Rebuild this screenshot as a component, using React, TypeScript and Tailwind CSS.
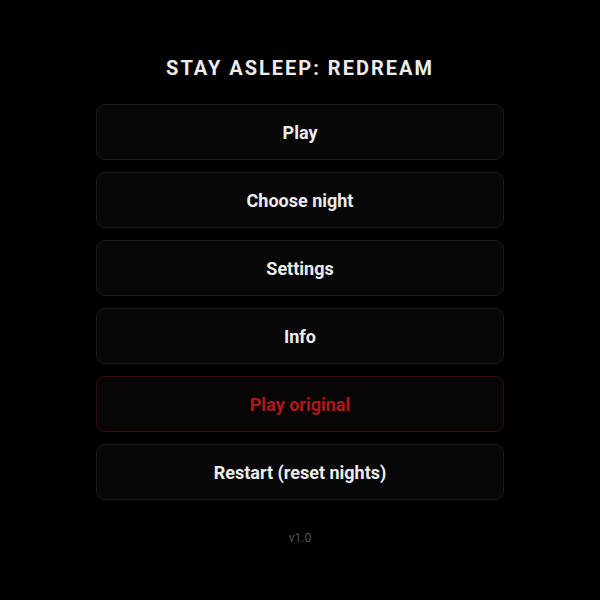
export default function App() {
  const items = ['Play', 'Choose night', 'Settings', 'Info']

  return (
    <div className="min-h-screen w-full bg-black flex flex-col items-center pt-[56px] font-['Roboto',sans-serif]">
      <h1 className="text-[20px] leading-[24px] font-bold tracking-[0.1em] text-[#ececec]">STAY ASLEEP: REDREAM</h1>
      <div className="mt-[24px] w-[408px] flex flex-col gap-3">
        {items.map(label => (
          <button
            key={label}
            className="h-14 w-full rounded-lg border border-[#1a1a1a] bg-[#070707] text-[18px] font-bold text-[#ececec]"
          >
            {label}
          </button>
        ))}
        <button className="h-14 w-full rounded-lg border border-[#3a0b0b] bg-[#060404] text-[18px] font-bold text-[#b3161b]">
          Play original
        </button>
        <button className="h-14 w-full rounded-lg border border-[#1a1a1a] bg-[#070707] text-[18px] font-bold text-[#ececec]">
          Restart (reset nights)
        </button>
      </div>
      <div className="mt-[30px] text-xs text-[#555]">v1.0</div>
    </div>
  )
}
